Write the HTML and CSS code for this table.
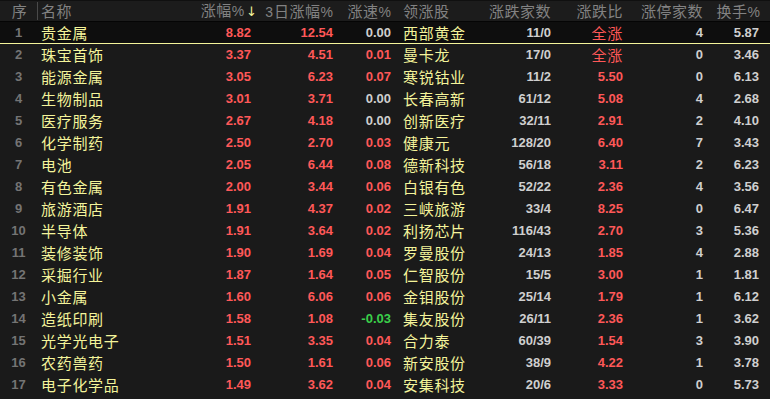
FILE: index.html
```html
<!DOCTYPE html>
<html lang="zh-CN">
<head>
<meta charset="utf-8">
<title>板块涨幅</title>
<link rel="stylesheet" href="styles.css">
</head>
<body>
<div class="board">
  <div class="row head">
    <div class="c idx">序</div>
    <div class="c name"><span class="sep"></span>名称</div>
    <div class="c num h3">涨幅<span class="pct">%</span><span class="arrow">↓</span></div>
    <div class="c num"><span class="lat">3</span>日涨幅<span class="pct">%</span></div>
    <div class="c num">涨速<span class="pct">%</span></div>
    <div class="c lead">领涨股</div>
    <div class="c num">涨跌家数</div>
    <div class="c num">涨跌比</div>
    <div class="c num">涨停家数</div>
    <div class="c num last">换手<span class="pct">%</span></div>
  </div>
  <div id="rows"></div>
</div>
<script src="app.js"></script>
</body>
</html>
```
FILE: app.js
```js
var data = [
["1","贵金属","8.82","12.54","0.00","西部黄金","11/0","全涨","4","5.87"],
["2","珠宝首饰","3.37","4.51","0.01","曼卡龙","17/0","全涨","0","3.46"],
["3","能源金属","3.05","6.23","0.07","寒锐钴业","11/2","5.50","0","6.13"],
["4","生物制品","3.01","3.71","0.00","长春高新","61/12","5.08","4","2.68"],
["5","医疗服务","2.67","4.18","0.00","创新医疗","32/11","2.91","2","4.10"],
["6","化学制药","2.50","2.70","0.03","健康元","128/20","6.40","7","3.43"],
["7","电池","2.05","6.44","0.08","德新科技","56/18","3.11","2","6.23"],
["8","有色金属","2.00","3.44","0.06","白银有色","52/22","2.36","4","3.56"],
["9","旅游酒店","1.91","4.37","0.02","三峡旅游","33/4","8.25","0","6.47"],
["10","半导体","1.91","3.64","0.02","利扬芯片","116/43","2.70","3","5.36"],
["11","装修装饰","1.90","1.69","0.04","罗曼股份","24/13","1.85","4","2.88"],
["12","采掘行业","1.87","1.64","0.05","仁智股份","15/5","3.00","1","1.81"],
["13","小金属","1.60","6.06","0.06","金钼股份","25/14","1.79","1","6.12"],
["14","造纸印刷","1.58","1.08","-0.03","集友股份","26/11","2.36","1","3.62"],
["15","光学光电子","1.51","3.35","0.04","合力泰","60/39","1.54","3","3.90"],
["16","农药兽药","1.50","1.61","0.06","新安股份","38/9","4.22","1","3.78"],
["17","电子化学品","1.49","3.62","0.04","安集科技","20/6","3.33","0","5.73"]
];
function cls(v){
  if (v.charAt(0) === "-") return "down";
  if (parseFloat(v) === 0) return "flat";
  return "up";
}
var html = "";
data.forEach(function(r, i){
  html += '<div class="row body' + (i === 0 ? ' sel' : '') + '">' +
    '<div class="c idx n">' + r[0] + '</div>' +
    '<div class="c name">' + r[1] + '</div>' +
    '<div class="c num v ' + cls(r[2]) + '">' + r[2] + '</div>' +
    '<div class="c num v ' + cls(r[3]) + '">' + r[3] + '</div>' +
    '<div class="c num v ' + cls(r[4]) + '">' + r[4] + '</div>' +
    '<div class="c lead">' + r[5] + '</div>' +
    '<div class="c num v flat">' + r[6] + '</div>' +
    '<div class="c num ' + (r[7] === "全涨" ? 'cjk up' : 'v up') + '">' + r[7] + '</div>' +
    '<div class="c num v flat">' + r[8] + '</div>' +
    '<div class="c num v flat last">' + r[9] + '</div>' +
    '</div>';
});
document.getElementById("rows").innerHTML = html;
```
FILE: styles.css
```css
html, body {
  margin: 0;
  padding: 0;
  background: #1a1a1a;
}
body {
  width: 770px;
  height: 399px;
  overflow: hidden;
  font-family: "Noto Sans CJK SC", "Liberation Sans", sans-serif;
}
.board {
  width: 770px;
}
.row {
  display: grid;
  grid-template-columns: 37px 143px 78px 82px 58px 82px 78px 72px 80px 60px;
  height: 22px;
  align-items: center;
}
.head {
  background: #1c1c1c;
  box-shadow: inset 0 1px 0 #101010, inset 0 -1px 0 #050505;
  color: #828282;
  font-size: 15px;
  letter-spacing: 0.5px;
}
.body {
  background: #1a1a1a;
}
.body.sel {
  background: #0e0e0e;
  box-shadow: inset 0 -1px 0 #f4f49a;
}
.c {
  white-space: nowrap;
  line-height: 20px;
}
.idx {
  text-align: center;
}
.head .idx {
  padding-left: 2px;
}
.name {
  position: relative;
  padding-left: 4px;
}
.sep {
  position: absolute;
  left: 0;
  top: 1px;
  width: 1px;
  height: 18px;
  background: #4a4a4a;
}
.num {
  text-align: right;
  padding-right: 7px;
}
.head .num {
  letter-spacing: 0.5px;
}
.pct, .lat {
  font-family: "Liberation Sans", sans-serif;
  font-size: 14px;
  letter-spacing: 0;
}
.pct {
  margin-left: 0;
}
.lat {
  margin-right: 1px;
}
.head .h3 {
  padding-right: 1px;
}
.arrow {
  color: #f4f49a;
  font-family: "DejaVu Sans", sans-serif;
  font-size: 13px;
  letter-spacing: 0;
  margin-left: 2px;
}
.last {
  padding-right: 11px;
}
.head .last {
  padding-right: 10px;
}
.lead {
  padding-left: 5px;
}
.body .name, .body .lead {
  color: #f4f49a;
  font-size: 15px;
  letter-spacing: 0.7px;
}
.n {
  color: #747474;
  font-family: "Liberation Sans", sans-serif;
  font-weight: bold;
  font-size: 13px;
}
.v {
  font-family: "Liberation Sans", sans-serif;
  font-weight: bold;
  font-size: 13px;
}
.cjk {
  font-size: 15px;
  letter-spacing: 0.7px;
}
.up { color: #ff5858; }
.down { color: #3ad04a; }
.flat { color: #cfcfcf; }
```
